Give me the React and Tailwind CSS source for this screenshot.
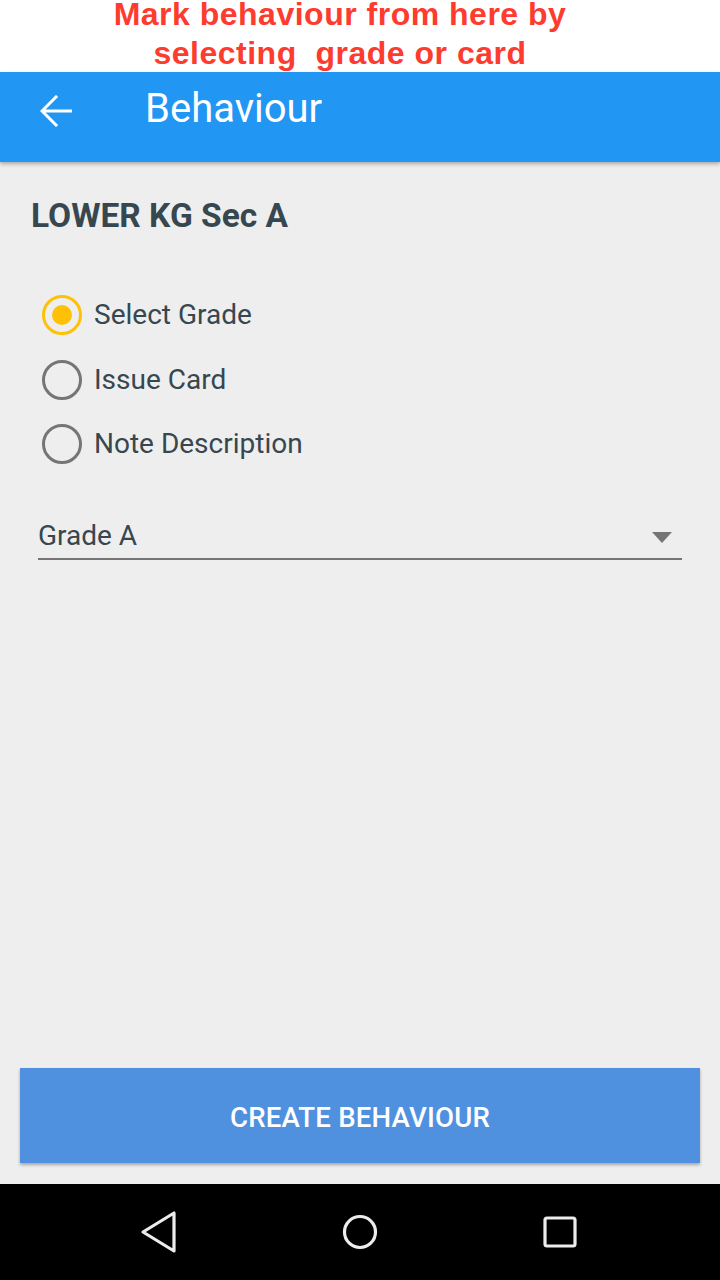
import React from "react";

function Radio({ checked, label }) {
  return (
    <div className="flex items-center h-[64.5px]">
      <div
        className={
          checked
            ? "w-10 h-10 rounded-full border-[3.5px] border-[#ffc107] flex items-center justify-center"
            : "w-10 h-10 rounded-full border-[3.5px] border-[#757575]"
        }
      >
        {checked && <div className="w-5 h-5 rounded-full bg-[#ffc107]" />}
      </div>
      <span className="ml-3 text-[28px] leading-[36px] text-[#37474f]">{label}</span>
    </div>
  );
}

export default function App() {
  return (
    <div
      className="w-[720px] h-[1280px] flex flex-col bg-[#eeeeee] overflow-hidden"
      style={{ fontFamily: "Roboto, 'Liberation Sans', sans-serif" }}
    >
      <div
        className="h-[72px] bg-white flex flex-col items-center pr-[40px] text-[#fd3b2f] font-bold text-[32px] tracking-[0.5px]"
        style={{ fontFamily: "'Liberation Sans', Arial, sans-serif" }}
      >
        <div className="leading-[28px]">Mark behaviour from here by</div>
        <div className="leading-[28px] mt-[11px]">selecting&nbsp; grade or card</div>
      </div>
      <div className="relative z-10 h-[90px] bg-[#2196f3] flex items-center shadow-[0_2px_4px_rgba(0,0,0,0.3)]">
        <svg width="32" height="32" viewBox="0 0 32 32" className="ml-[40px] -mt-[12px]">
          <path
            d="M31 16H3M16 2L2 16L16 30"
            fill="none"
            stroke="white"
            strokeWidth="3"
            strokeLinecap="square"
            strokeLinejoin="miter"
          />
        </svg>
        <span className="ml-[73px] text-white text-[40px] leading-[44px] -mt-[16px]">Behaviour</span>
      </div>
      <div className="flex-1 flex flex-col">
        <h1 className="mt-[36px] ml-[31px] text-[33.5px] leading-[36px] font-bold text-[#37474f]">
          LOWER KG Sec A
        </h1>
        <div className="mt-[49px] ml-[42px] flex flex-col">
          <Radio checked label="Select Grade" />
          <Radio label="Issue Card" />
          <Radio label="Note Description" />
        </div>
        <div className="mt-[41px] mx-[38px] border-b-2 border-[#757575] flex items-center justify-between pb-[4px]">
          <span className="text-[28px] leading-[36px] text-[#37474f]">Grade A</span>
          <svg width="20" height="11" viewBox="0 0 20 11" className="mr-[10px] mt-[4px]">
            <path d="M0 0H20L10 11Z" fill="#757575" />
          </svg>
        </div>
        <div className="mt-auto mx-[20px] mb-[21px] h-[95px] bg-[#4f91df] flex items-center justify-center pt-[5px] shadow-[0_2px_3px_rgba(0,0,0,0.3)]">
          <span className="text-white text-[27.6px] font-medium tracking-[0.2px]">CREATE BEHAVIOUR</span>
        </div>
      </div>
      <div className="h-[96px] bg-black flex items-center">
        <div className="flex-1 flex justify-center">
          <svg width="40" height="44" viewBox="0 0 40 44" className="ml-[78px]">
            <path
              d="M35 3V41L4 22Z"
              fill="none"
              stroke="#ececec"
              strokeWidth="3.2"
              strokeLinejoin="round"
            />
          </svg>
        </div>
        <div className="flex-1 flex justify-center">
          <svg width="40" height="40" viewBox="0 0 40 40">
            <circle cx="20" cy="20" r="15.5" fill="none" stroke="#ececec" strokeWidth="3.2" />
          </svg>
        </div>
        <div className="flex-1 flex justify-center">
          <svg width="36" height="36" viewBox="0 0 36 36" className="mr-[80px]">
            <rect x="3" y="4" width="30" height="28" rx="2" fill="none" stroke="#ececec" strokeWidth="3.2" />
          </svg>
        </div>
      </div>
    </div>
  );
}
